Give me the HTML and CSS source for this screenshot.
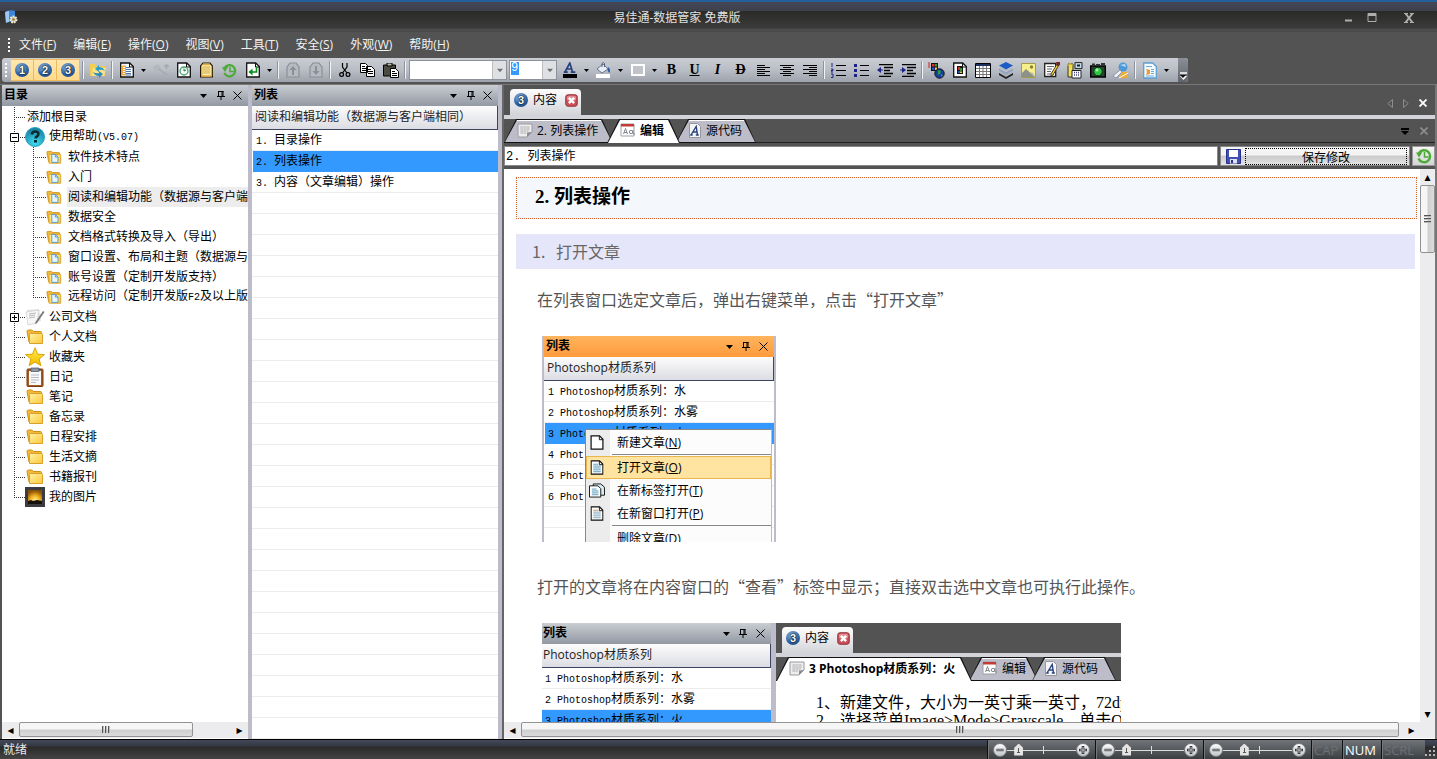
FILE: index.html
```html
<!DOCTYPE html>
<html lang="zh-CN">
<head>
<meta charset="utf-8">
<title>易佳通-数据管家 免费版</title>
<link rel="stylesheet" href="styles.css">
</head>
<body>
<svg class="defs" aria-hidden="true">
  <defs>
    <linearGradient id="gFold" x1="0" y1="0" x2="1" y2="1"><stop offset="0" stop-color="#fff3a8"/><stop offset="1" stop-color="#fbc83a"/></linearGradient>
    <radialGradient id="gTeal" cx=".5" cy=".8" r=".8"><stop offset="0" stop-color="#3fe0ef"/><stop offset="1" stop-color="#1577a0"/></radialGradient>
    <linearGradient id="gStar" x1="0" y1="0" x2="0" y2="1"><stop offset="0" stop-color="#fff04a"/><stop offset="1" stop-color="#f3b800"/></linearGradient>
    <radialGradient id="gSun" cx=".5" cy=".75" r=".7"><stop offset="0" stop-color="#fff2a0"/><stop offset=".5" stop-color="#f0b020"/><stop offset="1" stop-color="#8a5208"/></radialGradient>
    <linearGradient id="gKnob" x1="0" y1="0" x2="0" y2="1"><stop offset="0" stop-color="#fff"/><stop offset="1" stop-color="#bfc2c6"/></linearGradient>
  </defs>
  <symbol id="folder" viewBox="0 0 18 16"><path d="M1 2.500Q1 1 2.500 1H6l1.500 1.500H14.500Q15.500 2.500 15.500 3.500V13H3Z" fill="#f3b838" stroke="#d0911c"/><path d="M3.500 14.500V5.500Q3.500 4.500 4.500 4.500H15.500Q16.500 4.500 16.500 5.500V14.500Z" fill="url(#gFold)" stroke="#d9a127"/></symbol>
  <symbol id="folderdoc" viewBox="0 0 18 16"><use href="#folder" width="18" height="16"/><path d="M6.500 4.500h4l3 3v6h-7z" fill="#e8f4fd" stroke="#4a94d6"/><path d="M10.500 4.500v3h3" fill="none" stroke="#4a94d6"/></symbol>
  <symbol id="help" viewBox="0 0 20 20"><circle cx="10" cy="10" r="9.500" fill="url(#gTeal)" stroke="#2aa6c0"/><path d="M6.800 7.500q.3-3 3.400-3 3.200 0 3.200 2.600 0 1.600-1.500 2.400-1.300.7-1.300 2" fill="none" stroke="#082c30" stroke-width="2.600"/><rect x="9" y="13" width="3" height="2.600" fill="#082c30"/></symbol>
  <symbol id="papers" viewBox="0 0 20 20"><path d="M2 3l12-1 2 12-12 2z" fill="#e2e2e2"/><path d="M1 5l13-2-2 13-9 2z" fill="#f6f6f6" stroke="#ccc" stroke-width=".7"/><path d="M4 7l7-1M4 9l6-1M4 11l6-1" stroke="#bbb"/><path d="M18 4l1.500 1L12 16l-2 1 .5-2z" fill="#777"/></symbol>
  <symbol id="star" viewBox="0 0 20 20"><path d="M10 .8l2.500 6.400 6.900.4-5.300 4.400 1.800 6.700L10 15l-5.900 3.700 1.800-6.700L.6 7.600l6.900-.4z" fill="url(#gStar)" stroke="#dca300"/></symbol>
  <symbol id="clip" viewBox="0 0 20 20"><rect x="2" y="2" width="16" height="17.500" rx="1" fill="#a65b22" stroke="#7a3d12"/><path d="M4 4h12v14H4z" fill="#f7f8fa"/><path d="M6 8h8M6 10.500h8M6 13h8M6 15.500h5" stroke="#b9bcc4"/><path d="M6 1h8v3.500H6z" fill="#8b96a6" stroke="#4e5866" stroke-width=".7"/></symbol>
  <symbol id="sunset" viewBox="0 0 20 20"><path d="M0 0h20v20H0z" fill="#3b3b40"/><path d="M3 3h14v14H3z" fill="url(#gSun)"/><path d="M3 14l3-1 2 1 4-1 5 1v3H3z" fill="#16120b"/></symbol>
  <symbol id="page" viewBox="0 0 14 16"><path d="M.7 1h9l3.600 3.600V15H.7z" fill="#fff" stroke="#111" stroke-width="1.300"/><path d="M9.500 1v4h4" fill="none" stroke="#111"/></symbol>
  <symbol id="pagetext" viewBox="0 0 14 16"><use href="#page" width="14" height="16"/><path d="M3 4.500h5M3 6.500h8M3 8.500h8M3 10.500h8M3 12.500h8" stroke="#5096b8"/></symbol>
  <symbol id="pagewin" viewBox="0 0 14 16"><use href="#page" width="14" height="16"/><path d="M3 4.500h5" stroke="#e08a3c"/><path d="M3 6.500h8M3 8.500h8M3 10.500h8M3 12.500h8" stroke="#7ba3ba"/></symbol>
  <symbol id="pages" viewBox="0 0 17 16"><path d="M4.500 1h8l4 3.500V13h-12z" fill="#d8ecf6" stroke="#111"/><path d="M.5 3h9l3 3v9H.5z" fill="#fff" stroke="#111"/><path d="M3 6.500h5M3 8.500h7M3 10.500h7M3 12.500h7" stroke="#5096b8"/></symbol>
  <symbol id="history" viewBox="0 0 16 16"><path d="M3 5a6 6 0 1 1-.5 5.500" fill="none" stroke="#4cab38" stroke-width="2.400"/><path d="M0 4.500l6.500-.2L3 9.500z" fill="#4cab38"/><path d="M8.500 4v5h4" fill="none" stroke="#4cab38" stroke-width="1.600"/></symbol>
  <symbol id="down" viewBox="0 0 7 4"><path d="M0 0h7L3.500 4z" fill="#000"/></symbol>
  <symbol id="pin" viewBox="0 0 8 9"><path d="M1.500 0v5M6 0v5M1 .5h5.500M0 5.500h8M4 6v3M5 0v5" fill="none" stroke="#000"/></symbol>
  <symbol id="x" viewBox="0 0 9 9"><path d="M.5.5l8 8M8.500.5l-8 8" stroke="currentColor"/></symbol>
  <symbol id="closered" viewBox="0 0 14 14"><rect x=".8" y=".8" width="12.400" height="12.400" rx="2.500" fill="#c9515a" stroke="#8d2731"/><rect x="2" y="2" width="10" height="5" rx="2" fill="#e08c90"/><path d="M4.200 4.200l5.600 5.600M9.800 4.200L4.200 9.800" stroke="#fff" stroke-width="2.600"/></symbol>
  <symbol id="thumbpage" viewBox="0 0 16 15"><path d="M1 1h14v8l-5 5H1z" fill="#ededee" stroke="#9a9aa0"/><path d="M3 4h10M3 6h10M3 8h8M3 10h6M5 3v8M8 3v8M11 3v6" stroke="#c2c2c5"/><path d="M15 9l-5 .5V14z" fill="#8b8b92"/></symbol>
  <symbol id="aa" viewBox="0 0 16 15"><path d="M1 1h13v12H1z" fill="#fff" stroke="#9aa0aa"/><path d="M1 1h13v2.500H1z" fill="#c43a34"/><path d="M3.500 11l2-5.500L7.500 11M4 9.500h3" fill="none" stroke="#82868d"/><circle cx="11" cy="9" r="1.700" fill="none" stroke="#82868d"/><path d="M13 7v4h2" fill="none" stroke="#82868d"/></symbol>
  <symbol id="srcA" viewBox="0 0 12 15"><path d="M.5.5h8l3 3v11H.5z" fill="#f5f5f6" stroke="#96969c"/><path d="M2 12L7.200 3.500 8.500 12M3.500 9h4.500M1.200 12h2.500M6.800 12h3" fill="none" stroke="#27417c" stroke-width="1.400"/></symbol>
  <symbol id="minus" viewBox="0 0 14 14"><circle cx="7" cy="7" r="6.500" fill="url(#gKnob)" stroke="#77797c"/><path d="M3.500 7h7" stroke="#33363a" stroke-width="2.400"/><path d="M4 7h6" stroke="#ddd" stroke-width=".8"/></symbol>
  <symbol id="plus" viewBox="0 0 14 14"><circle cx="7" cy="7" r="6.500" fill="url(#gKnob)" stroke="#77797c"/><path d="M3 7h8M7 3v8" stroke="#33363a" stroke-width="2.600"/><path d="M4 7h6M7 4v6" stroke="#ddd" stroke-width=".8"/></symbol>
</svg>

<div class="window">
  <header class="titlebar">
    <svg class="logo" width="14" height="15" viewBox="0 0 14 15"><path d="M1 2q5-3 10-1v11q-5-1-9 1z" fill="#3c86d8"/><path d="M1 2q3-1 4-1v11q-2 0-3 1z" fill="#9fc8f2"/><circle cx="9.500" cy="9.500" r="3" fill="#d8c89a" stroke="#f3ead0" stroke-width="2" stroke-dasharray="1.600 1"/><circle cx="9.500" cy="9.500" r="1.200" fill="#8a7a50"/></svg>
    <h1 class="apptitle">易佳通-数据管家 免费版</h1>
    <div class="winbtns">
      <button aria-label="最小化"><svg width="9" height="9" viewBox="0 0 9 9"><path d="M1 7.500h7" stroke="#aeaeae" stroke-width="2"/></svg></button>
      <button aria-label="最大化"><svg width="10" height="9" viewBox="0 0 10 9"><path d="M1 .5h8v8H1z" fill="none" stroke="#aeaeae"/><path d="M1 1.500h8" stroke="#aeaeae" stroke-width="3"/></svg></button>
      <button aria-label="关闭" class="last"><svg width="10" height="10" viewBox="0 0 10 10"><path d="M1.500.5l7 9M8.500.5l-7 9" stroke="#aeaeae" stroke-width="2"/><path d="M0 .5h4M6 .5h4M0 9.500h4M6 9.500h4" stroke="#aeaeae"/></svg></button>
    </div>
  </header>

  <nav class="menubar">
    <span class="grip"></span>
    <button>文件(<u>F</u>)</button><button>编辑(<u>E</u>)</button><button>操作(<u>O</u>)</button><button>视图(<u>V</u>)</button><button>工具(<u>T</u>)</button><button>安全(<u>S</u>)</button><button>外观(<u>W</u>)</button><button>帮助(<u>H</u>)</button>
  </nav>

  <div class="toolrow">
  <div class="toolbar" role="toolbar" aria-label="工具栏">
    <span class="grip"></span>
    <button class="tb on" aria-label="目录窗口"><span class="num">1</span></button>
    <button class="tb on" aria-label="列表窗口"><span class="num">2</span></button>
    <button class="tb on" aria-label="内容窗口"><span class="num">3</span></button>
    <i class="sep"></i>
    <button class="tb" aria-label="刷新目录"><svg width="16" height="16" viewBox="0 0 16 16"><path d="M0 2h5l1 2h9v10H0z" fill="#f2cf52"/><path d="M3 6h13l-2 8H2z" fill="#fae28a"/><path d="M5 7l4-4v2q4 0 6 4-3-2-6-1v2z" fill="#2d9fce"/><path d="M13 12l-4 4v-2q-4 0-6-4 3 2 6 1V9z" fill="#2d8cc0"/></svg></button>
    <i class="sep"></i>
    <button class="tb" aria-label="新建文章"><svg width="14" height="16" viewBox="0 0 14 16"><use href="#page" width="14" height="16"/><path d="M2 3.500h4v10H2z" fill="#f4a83a"/><path d="M6 5.500h4M6 7.500h5M6 9.500h5M6 11.500h5M6 13h5" stroke="#4b78b0"/><path d="M3 5.500h2M3 7.500h2M3 9.500h2M3 11.500h2" stroke="#fff"/></svg></button>
    <button class="arr" aria-label="更多新建"><svg width="5" height="3"><use href="#down"/></svg></button>
    <button class="tb" aria-label="密钥" disabled><svg width="16" height="16" viewBox="0 0 16 16"><circle cx="4" cy="6" r="3.500" fill="#b3b7be"/><path d="M6 7l8 6M11 4h5M13.500 2v5" stroke="#a4a8b0" stroke-width="1.500"/></svg></button>
    <button class="tb" aria-label="定时文章"><svg width="14" height="16" viewBox="0 0 14 16"><use href="#page" width="14" height="16"/><circle cx="7" cy="9" r="4" fill="#f3fbf4" stroke="#46a071" stroke-width="1.300"/><path d="M7 9V6.500M7 9l2-1" stroke="#276b48"/></svg></button>
    <button class="tb" aria-label="便笺"><svg width="13" height="16" viewBox="0 0 13 16"><path d="M3 1h7l2.500 3v11H.6V4z" fill="#fff3b0" stroke="#1b1608" stroke-width="1.200"/><path d="M3 2.500h7M1.500 14h10M1.800 4v10M11.500 4v10" stroke="#e9a83a" stroke-width="1.400"/><path d="M3 5h7M3 7h7M3 9h7M3 11h7" stroke="#c9a24a"/></svg></button>
    <button class="tb" aria-label="历史"><svg width="15" height="15"><use href="#history"/></svg></button>
    <button class="tb" aria-label="返回"><svg width="14" height="16" viewBox="0 0 14 16"><use href="#page" width="14" height="16"/><path d="M10.500 5v5H5" fill="none" stroke="#0c8a1c" stroke-width="1.600"/><path d="M2.500 10L6.500 6.500v7z" fill="#0c8a1c"/></svg></button>
    <button class="arr" aria-label="更多返回"><svg width="5" height="3"><use href="#down"/></svg></button>
    <i class="sep"></i>
    <button class="tb" aria-label="上移" disabled><svg width="14" height="16" viewBox="0 0 14 16"><path d="M1 5l3-4h6l3 4v10H1z" fill="#b6bac1" stroke="#8a8f98" stroke-width="1.200"/><path d="M7 4l3.500 4H8v5H6V8H3.500z" fill="#8a8f98"/></svg></button>
    <button class="tb" aria-label="下移" disabled><svg width="14" height="16" viewBox="0 0 14 16"><path d="M1 5l3-4h6l3 4v10H1z" fill="#b6bac1" stroke="#8a8f98" stroke-width="1.200"/><path d="M7 13l3.500-4H8V4H6v5H3.500z" fill="#8a8f98"/></svg></button>
    <i class="sep"></i>
    <button class="tb" aria-label="剪切"><svg width="12" height="15" viewBox="0 0 12 15"><path d="M3.500 0v4l4.500 6M8 0v4l-4.500 6" fill="none" stroke="#000" stroke-width="1.200"/><circle cx="2.600" cy="11.500" r="1.900" fill="none" stroke="#000" stroke-width="1.200"/><circle cx="9" cy="11.500" r="1.900" fill="none" stroke="#000" stroke-width="1.200"/></svg></button>
    <button class="tb" aria-label="复制"><svg width="15" height="14" viewBox="0 0 15 14"><path d="M.5.5h5l2 2v7h-7zM6.500 3.500h5l3 3v7h-8z" fill="#fff" stroke="#000"/><path d="M2 3.500h3M2 5.500h4M2 7.500h4M8 6.500h3M8 8.500h5M8 10.500h5" stroke="#000"/></svg></button>
    <button class="tb" aria-label="粘贴"><svg width="16" height="15" viewBox="0 0 16 15"><path d="M.5 2h12v11H.5z" fill="#4b4b40" stroke="#000"/><path d="M4 0h5v3H4z" fill="#b9b9a6" stroke="#000"/><path d="M7.500 5.500h5l3 3v6h-8z" fill="#fff" stroke="#000"/><path d="M9 8.500h3M9 10.500h5M9 12.500h5" stroke="#000"/></svg></button>
    <i class="sep"></i>
    <label class="combo wide"><select aria-label="字体"><option></option></select><span class="drop"><svg width="6" height="5"><use href="#down"/></svg></span></label>
    <label class="combo"><select class="sel" aria-label="字号"><option>9</option></select><span class="drop"><svg width="6" height="5"><use href="#down"/></svg></span></label>
    <button class="tb" aria-label="字体颜色"><svg width="14" height="16" viewBox="0 0 14 16"><path d="M0 12h14v4H0z"/><path d="M2 10L6.800 1l2.800 9M4 7h5M.8 10.200h4M7.800 10.200h4.500" fill="none" stroke="#27427e" stroke-width="1.700"/></svg></button>
    <button class="arr" aria-label="选择字体颜色"><svg width="5" height="3"><use href="#down"/></svg></button>
    <button class="tb" aria-label="填充颜色"><svg width="15" height="16" viewBox="0 0 15 16"><path d="M0 12h14v4H0z" fill="#fff"/><path d="M1 7l6-5 5 5-6 4z" fill="#e9eef5" stroke="#62779b"/><path d="M6 5V1.500q1.500-2 2.500 0V5" fill="none" stroke="#53617c"/><path d="M12 5q3 2 1.500 6Q11 9 12 5z" fill="#2c58a0"/></svg></button>
    <button class="arr" aria-label="选择填充颜色"><svg width="5" height="3"><use href="#down"/></svg></button>
    <button class="tb" aria-label="边框"><svg width="14" height="12"><rect x="1" y="1" width="12" height="10" fill="#c0c4ca" stroke="#fff" stroke-width="2"/></svg></button>
    <button class="arr" aria-label="选择边框"><svg width="5" height="3"><use href="#down"/></svg></button>
    <button class="tb fmt" aria-label="粗体"><b>B</b></button>
    <button class="tb fmt" aria-label="下划线"><u>U</u></button>
    <button class="tb fmt" aria-label="斜体"><em>I</em></button>
    <button class="tb fmt" aria-label="删除线"><s>D</s></button>
    <button class="tb" aria-label="左对齐"><svg width="14" height="11" viewBox="0 0 14 11"><path d="M0 .5h8M0 2.500h13M0 4.500h8M0 6.500h13M0 8.500h8M0 10.500h13" stroke="#000"/></svg></button>
    <button class="tb" aria-label="居中"><svg width="14" height="11" viewBox="0 0 14 11"><path d="M0 .5h14M3 2.500h8M0 4.500h14M3 6.500h8M0 8.500h14M3 10.500h8" stroke="#000"/></svg></button>
    <button class="tb" aria-label="右对齐"><svg width="14" height="11" viewBox="0 0 14 11"><path d="M0 .5h14M6 2.500h8M0 4.500h14M6 6.500h8M0 8.500h14M6 10.500h8" stroke="#000"/></svg></button>
    <i class="sep"></i>
    <button class="tb" aria-label="编号列表"><svg width="15" height="15" viewBox="0 0 15 15"><path d="M1 0v4M0 6h2v1.500H0V9h2M0 11h2v3.500H0" fill="none" stroke="#1b2387"/><path d="M5 2.500h10M5 7.500h10M5 12.500h10" stroke="#000"/></svg></button>
    <button class="tb" aria-label="项目列表"><svg width="15" height="15" viewBox="0 0 15 15"><path d="M0 1h3v3H0zM0 6h3v3H0zM0 11h3v3H0z" fill="#1b2387"/><path d="M6 2.500h9M6 7.500h9M6 12.500h9" stroke="#000"/></svg></button>
    <button class="tb" aria-label="减少缩进"><svg width="16" height="13" viewBox="0 0 16 13"><path d="M0 6l4-3v6z" fill="#1b2387"/><path d="M3 6h3" stroke="#1b2387"/><path d="M2 .5h14M2 12.500h12M7 3.500h9M7 6.500h6M7 9.500h9" stroke="#000" stroke-width="1.400"/></svg></button>
    <button class="tb" aria-label="增加缩进"><svg width="16" height="13" viewBox="0 0 16 13"><path d="M6 6L2 3v6z" fill="#1b2387"/><path d="M0 6h3" stroke="#1b2387"/><path d="M2 .5h14M2 12.500h12M7 3.500h9M7 6.500h6M7 9.500h9" stroke="#000" stroke-width="1.400"/></svg></button>
    <i class="sep"></i>
    <button class="tb" aria-label="超链接"><svg width="17" height="17" viewBox="0 0 17 17"><path d="M3 1h7v8H3z" fill="#111"/><path d="M4 2h2.500v2.500H4z" fill="#d33"/><path d="M7 2h2v2.500H7z" fill="#2a9c2a"/><path d="M4 5.500h2.500V8H4z" fill="#25c"/><path d="M7 5.500h2V8H7z" fill="#ec3"/><path d="M0 1h2M0 3h2M0 5h2" stroke="#c22"/><circle cx="11.500" cy="11.500" r="4.700" fill="#1a3ca8" stroke="#111"/><path d="M10 8l3 1-1 3-2 1zM13 12l2 1-2 2z" fill="#27a52e"/></svg></button>
    <button class="tb" aria-label="插入文件"><svg width="14" height="16" viewBox="0 0 14 16"><use href="#page" width="14" height="16"/><path d="M4 4h6v8H4z" fill="#111"/><path d="M5 5h2v3H5z" fill="#c33"/><path d="M7 6h2v3H7z" fill="#2a9c2a"/><path d="M5 9h2v2H5z" fill="#25c"/><path d="M7 9.500h2v1.500H7z" fill="#ec3"/></svg></button>
    <button class="tb" aria-label="表格"><svg width="16" height="15" viewBox="0 0 16 15"><path d="M.5.5h15v14H.5z" fill="#fff" stroke="#000"/><path d="M1 2h14" stroke="#1d3161" stroke-width="2"/><path d="M1 5.500h14M1 8.500h14M1 11.500h14M4.500 3v11M8 3v11M11.500 3v11" stroke="#777"/></svg></button>
    <button class="tb" aria-label="图层"><svg width="14" height="17" viewBox="0 0 14 17"><path d="M7 0l7 3.500L7 7.500 0 3.500z" fill="#1c5cc6"/><path d="M0 6.500l7 4 7-4v2l-7 4-7-4z" fill="#8fa4bc"/><path d="M0 11l7 4 7-4v2l-7 4-7-4z" fill="#222"/></svg></button>
    <button class="tb" aria-label="图片"><svg width="15" height="15" viewBox="0 0 15 15"><path d="M.5.5h14v14H.5z" fill="#f7ee8c" stroke="#a69b4b"/><circle cx="10.500" cy="4" r="1.700" fill="#8b812e"/><path d="M1 14v-4l4-4 9 8z" fill="#8e9187"/><path d="M9 10l2-1 3 4v1z" fill="#b9bdb0"/></svg></button>
    <button class="tb" aria-label="编辑文本"><svg width="16" height="16" viewBox="0 0 16 16"><path d="M.7 1.500h11v13H.7z" fill="#fff" stroke="#222" stroke-width="1.300"/><path d="M3 4.500h7M3 7h5M3 9.500h4M3 12h7" stroke="#666"/><path d="M13 2l2 1-6 10-2 1V12z" fill="#f0c63a" stroke="#222" stroke-width=".8"/><path d="M12 0h4v3l-3 1z" fill="#7d2222"/></svg></button>
    <button class="tb" aria-label="模板"><svg width="16" height="17" viewBox="0 0 16 17"><path d="M1 2h5v13H1z" fill="#f2df5a" stroke="#333"/><path d="M3 0v6M0 3h6" stroke="#e9d23a"/><path d="M8 .6h7v6H8z" fill="#c8dbe8" stroke="#222"/><path d="M10 2.500h3v2h-3z" fill="#123"/><path d="M5 8.500h9V16H5z" fill="#fff" stroke="#222"/><path d="M7 10.500h5M7 13h5" stroke="#448" stroke-dasharray="1 1" stroke-width="1.500"/></svg></button>
    <button class="tb" aria-label="截图"><svg width="16" height="17" viewBox="0 0 16 17"><path d="M.7 4h14.600v11H.7z" fill="#2c4236" stroke="#000" stroke-width="1.400"/><path d="M2 1.500h3V4H2zM11 1h4v3h-4zM6 2h4v2H6z" fill="#333"/><circle cx="8" cy="9.500" r="4.300" fill="#30c644" stroke="#06310d"/><circle cx="7" cy="8" r="1.500" fill="#a6f4ac"/></svg></button>
    <button class="tb" aria-label="格式刷"><svg width="16" height="17" viewBox="0 0 16 17"><circle cx="10" cy="5" r="4.500" fill="#4d9ad6"/><path d="M7 3l5-1 1 3z" fill="#b9dcf4"/><path d="M0 14l7-6 2 2-6 6z" fill="#eef3f7" stroke="#8698a8"/><path d="M9 10h6v6H6z" fill="#f0ad35"/><path d="M6 16l9-5" stroke="#fff"/></svg></button>
    <i class="sep"></i>
    <button class="tb" aria-label="收藏文档"><svg width="14" height="17" viewBox="0 0 14 17"><path d="M.7 1h9l3.600 3.500V16H.7z" fill="#f4fafe" stroke="#5b9fd6" stroke-width="1.300"/><path d="M3 4.500h6M3 14h8M8 7.500h3M8 9.500h3M8 11.500h3" stroke="#6da9d8"/><path d="M3 7l4 1v4l-4 1 1-3z" fill="#ee9a2c"/></svg></button>
    <button class="arr" aria-label="更多收藏"><svg width="5" height="3"><use href="#down"/></svg></button>
    <button class="over" aria-label="工具栏选项"><svg width="7" height="8" viewBox="0 0 7 8"><path d="M0 1h7" stroke="#fff" stroke-width="1.500"/><path d="M0 4h7L3.500 8z" fill="#fff"/><path d="M0 3h6L3 6z" fill="#111"/></svg></button>
  </div>
  </div>

  <main class="main">
    <section class="pane catalog" aria-label="目录">
      <div class="phead"><h2>目录</h2><button aria-label="菜单"><svg width="7" height="4"><use href="#down"/></svg></button><button aria-label="固定"><svg width="8" height="9"><use href="#pin"/></svg></button><button aria-label="关闭"><svg width="9" height="9"><use href="#x"/></svg></button></div>
      <ul class="tree">
        <li class="row add"><i class="h"></i><a href="#add">添加根目录</a></li>
        <li class="row"><i class="h box"><svg width="9" height="9" viewBox="0 0 9 9"><path d="M.5.5h8v8h-8z" fill="#fff" stroke="#000"/><path d="M2 4.500h5" stroke="#000"/></svg></i><svg width="20" height="20"><use href="#help"/></svg><a href="#help-doc">使用帮助<span class="m">(V5.07)</span></a></li>
        <li>
          <ul class="sub">
            <li class="row"><i class="h"></i><svg width="16" height="15"><use href="#folderdoc"/></svg><a href="#c1">软件技术特点</a></li>
            <li class="row"><i class="h"></i><svg width="16" height="15"><use href="#folderdoc"/></svg><a href="#c2">入门</a></li>
            <li class="row cur"><i class="h"></i><svg width="16" height="15"><use href="#folderdoc"/></svg><a href="#c3">阅读和编辑功能（数据源与客户端相同）</a></li>
            <li class="row"><i class="h"></i><svg width="16" height="15"><use href="#folderdoc"/></svg><a href="#c4">数据安全</a></li>
            <li class="row"><i class="h"></i><svg width="16" height="15"><use href="#folderdoc"/></svg><a href="#c5">文档格式转换及导入（导出）</a></li>
            <li class="row"><i class="h"></i><svg width="16" height="15"><use href="#folderdoc"/></svg><a href="#c6">窗口设置、布局和主题（数据源与客户端）</a></li>
            <li class="row"><i class="h"></i><svg width="16" height="15"><use href="#folderdoc"/></svg><a href="#c7">账号设置（定制开发版支持）</a></li>
            <li class="row"><i class="h"></i><svg width="16" height="15"><use href="#folderdoc"/></svg><a href="#c8">远程访问（定制开发版<span class="m">F2</span>及以上版本）</a></li>
          </ul>
        </li>
        <li class="row"><i class="h box"><svg width="9" height="9" viewBox="0 0 9 9"><path d="M.5.5h8v8h-8z" fill="#fff" stroke="#000"/><path d="M2 4.500h5M4.500 2v5" stroke="#000"/></svg></i><svg width="20" height="20"><use href="#papers"/></svg><a href="#r1">公司文档</a></li>
        <li class="row"><i class="h"></i><svg width="20" height="16"><use href="#folder"/></svg><a href="#r2">个人文档</a></li>
        <li class="row"><i class="h"></i><svg width="20" height="20"><use href="#star"/></svg><a href="#r3">收藏夹</a></li>
        <li class="row"><i class="h"></i><svg width="20" height="20"><use href="#clip"/></svg><a href="#r4">日记</a></li>
        <li class="row"><i class="h"></i><svg width="20" height="16"><use href="#folder"/></svg><a href="#r5">笔记</a></li>
        <li class="row"><i class="h"></i><svg width="20" height="16"><use href="#folder"/></svg><a href="#r6">备忘录</a></li>
        <li class="row"><i class="h"></i><svg width="20" height="16"><use href="#folder"/></svg><a href="#r7">日程安排</a></li>
        <li class="row"><i class="h"></i><svg width="20" height="16"><use href="#folder"/></svg><a href="#r8">生活文摘</a></li>
        <li class="row"><i class="h"></i><svg width="20" height="16"><use href="#folder"/></svg><a href="#r9">书籍报刊</a></li>
        <li class="row end"><i class="h"></i><svg width="20" height="20"><use href="#sunset"/></svg><a href="#r10">我的图片</a></li>
      </ul>
      <div class="hscroll"><button aria-label="向左">◂</button><div class="track"><div class="thumb part"><i></i></div></div><button aria-label="向右">▸</button></div>
    </section>

    <section class="pane list" aria-label="列表">
      <div class="phead"><h2>列表</h2><button aria-label="菜单"><svg width="7" height="4"><use href="#down"/></svg></button><button aria-label="固定"><svg width="8" height="9"><use href="#pin"/></svg></button><button aria-label="关闭"><svg width="9" height="9"><use href="#x"/></svg></button></div>
      <div class="colhead">阅读和编辑功能（数据源与客户端相同）</div>
      <ul class="lines">
        <li><span class="m">1. </span>目录操作</li>
        <li class="sel"><span class="m">2. </span>列表操作</li>
        <li><span class="m">3. </span>内容（文章编辑）操作</li>
      </ul>
    </section>

    <section class="content" aria-label="内容">
      <div class="toptabs">
        <div class="ctab"><span class="num">3</span><span>内容</span><button aria-label="关闭内容"><svg width="13" height="13"><use href="#closered"/></svg></button></div>
        <div class="tabnav">
          <button aria-label="上一个"><svg width="6" height="9" viewBox="0 0 6 9"><path d="M5.500.5v8L.8 4.500z" fill="none" stroke="#8c8c8c"/></svg></button>
          <button aria-label="下一个"><svg width="6" height="9" viewBox="0 0 6 9"><path d="M.5.5v8l4.700-4z" fill="none" stroke="#8c8c8c"/></svg></button>
          <button aria-label="关闭"><svg width="8" height="8" viewBox="0 0 8 8"><path d="M.5.5l7 7M7.500.5l-7 7" stroke="#fff" stroke-width="1.800"/></svg></button>
        </div>
      </div>
      <div class="subtabs">
        <button class="st w1"><svg width="16" height="15"><use href="#thumbpage"/></svg>2. 列表操作</button>
        <button class="st act w2"><svg width="16" height="15"><use href="#aa"/></svg>编辑</button>
        <button class="st w3"><svg width="12" height="15"><use href="#srcA"/></svg>源代码</button>
        <div class="tabnav">
          <button aria-label="标签列表"><svg width="8" height="7" viewBox="0 0 8 7"><path d="M0 0h8v2H0zM0 3h8L4 7z"/></svg></button>
          <button aria-label="关闭标签"><svg width="8" height="8" viewBox="0 0 8 8"><path d="M.5.5l7 7M7.500.5l-7 7" stroke="#8f8f8f" stroke-width="1.600"/></svg></button>
        </div>
      </div>
      <div class="titlerow">
        <input type="text" aria-label="标题" value="2. 列表操作">
        <button class="save"><svg width="15" height="15" viewBox="0 0 15 15"><path d="M.5.5h14v14H.5z" fill="#3f50b8" stroke="#27308a"/><path d="M3 1h9v7H3z" fill="#fff"/><path d="M4 10h7v4.500H4z" fill="#dfe3f4"/><path d="M5 11h2v3H5z" fill="#27308a"/></svg><span>保存修改</span></button>
        <button class="hist" aria-label="历史版本"><svg width="16" height="16"><use href="#history"/></svg></button>
      </div>
      <div class="docwrap">
        <article class="doc">
          <h2 class="dt">2. 列表操作</h2>
          <h3 class="ds"><span>1.</span>打开文章</h3>
          <p>在列表窗口选定文章后，弹出右键菜单，点击“打开文章”</p>
          <figure class="shot one">
            <div class="phead orange"><h4>列表</h4><svg width="7" height="4"><use href="#down"/></svg><svg width="8" height="9"><use href="#pin"/></svg><svg width="9" height="9"><use href="#x"/></svg></div>
            <div class="colhead">Photoshop材质系列</div>
            <ul class="lines">
              <li><span class="m">1 Photoshop</span>材质系列：水</li>
              <li><span class="m">2 Photoshop</span>材质系列：水雾</li>
              <li class="sel"><span class="m">3 Photoshop</span>材质系列：火</li>
              <li><span class="m">4 Phot</span></li>
              <li><span class="m">5 Phot</span></li>
              <li><span class="m">6 Phot</span></li>
            </ul>
            <div class="ctx">
              <div class="it"><svg width="13" height="15"><use href="#page"/></svg><span>新建文章(<u>N</u>)</span></div>
              <hr>
              <div class="it hot"><svg width="13" height="15"><use href="#pagetext"/></svg><span>打开文章(<u>O</u>)</span></div>
              <div class="it"><svg width="16" height="15"><use href="#pages"/></svg><span>在新标签打开(<u>T</u>)</span></div>
              <div class="it"><svg width="13" height="15"><use href="#pagewin"/></svg><span>在新窗口打开(<u>P</u>)</span></div>
              <hr>
              <div class="it"><i></i><span>删除文章(<u>D</u>)</span></div>
            </div>
          </figure>
          <p class="p2">打开的文章将在内容窗口的“查看”标签中显示；直接双击选中文章也可执行此操作。</p>
          <figure class="shot two">
            <div class="left">
              <div class="phead"><h4>列表</h4><svg width="7" height="4"><use href="#down"/></svg><svg width="8" height="9"><use href="#pin"/></svg><svg width="9" height="9"><use href="#x"/></svg></div>
              <div class="colhead">Photoshop材质系列</div>
              <ul class="lines">
                <li><span class="m">1 Photoshop</span>材质系列：水</li>
                <li><span class="m">2 Photoshop</span>材质系列：水雾</li>
                <li class="sel"><span class="m">3 Photoshop</span>材质系列：火</li>
              </ul>
            </div>
            <div class="right">
              <div class="toptabs"><div class="ctab"><span class="num">3</span><span>内容</span><svg width="13" height="13"><use href="#closered"/></svg></div></div>
              <div class="subtabs">
                <div class="st act v1"><svg width="16" height="15"><use href="#thumbpage"/></svg>3 Photoshop材质系列：火</div>
                <div class="st v2"><svg width="16" height="15"><use href="#aa"/></svg>编辑</div>
                <div class="st v3"><svg width="12" height="15"><use href="#srcA"/></svg>源代码</div>
              </div>
              <div class="mini">1、新建文件，大小为一英寸乘一英寸，72dpi<br>2、选择菜单Image&gt;Mode&gt;Grayscale，单击OK</div>
            </div>
          </figure>
        </article>
        <div class="vscroll"><button aria-label="向上">▴</button><div class="track"><div class="thumb"><i></i></div></div><button aria-label="向下">▾</button></div>
      </div>
      <div class="hscroll"><button aria-label="向左">◂</button><div class="track"><div class="thumb"><i></i></div></div><button aria-label="向右">▸</button><span class="corner"></span></div>
    </section>
  </main>

  <footer class="status">
    <span class="ready">就绪</span>
    <div class="zoom"><button aria-label="缩小目录"><svg width="14" height="14"><use href="#minus"/></svg></button><input type="range" aria-label="目录字号" value="12"><button aria-label="放大目录"><svg width="14" height="14"><use href="#plus"/></svg></button></div>
    <div class="zoom"><button aria-label="缩小列表"><svg width="14" height="14"><use href="#minus"/></svg></button><input type="range" aria-label="列表字号" value="12"><button aria-label="放大列表"><svg width="14" height="14"><use href="#plus"/></svg></button></div>
    <div class="zoom"><button aria-label="缩小内容"><svg width="14" height="14"><use href="#minus"/></svg></button><input type="range" aria-label="内容字号" value="28"><button aria-label="放大内容"><svg width="14" height="14"><use href="#plus"/></svg></button></div>
    <span class="key">CAP</span><span class="key lit">NUM</span><span class="key">SCRL</span>
    <svg class="size" width="11" height="11" viewBox="0 0 11 11"><path d="M8 0h2v2H8zM4 4h2v2H4zM8 4h2v2H8zM0 8h2v2H0zM4 8h2v2H4zM8 8h2v2H8z" fill="#b5b7ba"/></svg>
  </footer>
</div>
</body>
</html>
```
FILE: styles.css
```css
* { box-sizing: border-box; }
body, h1, h2, h3, h4, p, ul, figure { margin: 0; padding: 0; }
ul { list-style: none; }
body {
  font: 12px/20px "Open Sans", "Noto Sans CJK SC", sans-serif;
  color: #000;
  background: #535353;
  overflow: hidden;
}
button { font: inherit; color: inherit; background: none; border: 0; padding: 0; margin: 0; }
a { color: inherit; text-decoration: none; }
svg { display: block; flex: none; }
.defs { position: absolute; width: 0; height: 0; }
.m { font-family: "Liberation Mono", monospace; font-size: 10px; white-space: pre; }

.window { height: 100vh; display: flex; flex-direction: column; }

/* title bar */
.titlebar {
  display: flex; align-items: center; height: 32px; flex: none;
  padding: 2px 0 0 4px; border-top: 2px solid #23609c;
  background: linear-gradient(#454756 0, #3c404c 9px, #2a2a28 9px, #3b3b3b 26px, #4a4a4a 27px, #535353 30px);
  border-bottom: 1px solid #474747;
}
.apptitle { flex: 1; text-align: center; font-size: 12px; font-weight: 400; color: #e2e2e2; }
.winbtns { display: flex; width: 101px; }
.winbtns button { width: 24px; height: 16px; display: grid; place-items: center; }
.winbtns .last { margin-left: 13px; }

/* menu */
.menubar { display: flex; align-items: center; height: 26px; flex: none; padding-left: 5px; color: #f2f2f2; }
.menubar button { margin-right: 17px; white-space: nowrap; }
.grip { width: 9px; height: 14px; flex: none; background: repeating-linear-gradient(#fff 0 2px, transparent 2px 4px) 3px 0 / 2px 14px no-repeat; }
.menubar .grip { width: 14px; }

/* toolbar */
.toolrow { height: 26px; flex: none; padding-left: 2px; display: flex; }
.toolbar {
  display: flex; align-items: center; height: 24px; border-radius: 3px;
  background: linear-gradient(#cacdd3, #b9bdc5 50%, #9da2ac);
}
.tb { width: 23px; height: 22px; flex: none; display: grid; place-items: center; }
.tb.on { background: linear-gradient(#ffe7b0, #ffd98c); border: 1px solid #f0b95c; border-width: 1px 1px 1px 0; }
.num {
  display: block; width: 14px; height: 14px; border-radius: 50%; flex: none;
  background: radial-gradient(circle at 40% 30%, #8fb6dc, #2f66a8 55%, #123a70);
  color: #fff; font: bold 11px/14px "Liberation Sans", sans-serif; text-align: center;
  text-shadow: 0 0 1px #000, 0 0 1px #000, 0 0 2px #000;
}
.arr { width: 11px; height: 22px; flex: none; display: grid; place-items: center; }
.sep { width: 6px; height: 18px; flex: none; background: linear-gradient(#8e939d, #8e939d) 2px 0 / 1px 100% no-repeat, linear-gradient(#f1f2f4, #f1f2f4) 3px 0 / 1px 100% no-repeat; }
.combo { display: flex; width: 48px; height: 20px; flex: none; margin-right: 1px; background: #fff; border: 1px solid #8d9199; }
.combo.wide { width: 98px; margin: 0 2px 0 1px; }
.combo select { appearance: none; flex: 1; min-width: 0; border: 0; background: none; padding: 0; font: 12px "Liberation Sans", sans-serif; }
.combo .sel { flex: none; width: 8px; height: 13px; margin: 1px auto 0 1px; background: #3399ff; color: #fff; font: 12px/13px "Liberation Mono", monospace; }
.drop { width: 14px; display: grid; place-items: center; opacity: .55; background: #c5c8cd; border-left: 1px solid #888; }
.fmt { font: bold 14px/20px "Liberation Serif", serif; }
.over { width: 10px; height: 24px; margin-left: 6px; display: grid; place-items: end center; padding-bottom: 2px; background: linear-gradient(#8a8e96, #60646c); border-radius: 0 4px 4px 0; }

/* panes */
.main { flex: 1; min-height: 0; display: flex; padding-left: 2px; border-top: 1px solid #777; }
.pane { display: flex; flex-direction: column; background: #fff; flex: none; border-right: 4px solid #bcbcca; min-width: 0; }
.catalog { width: 250px; }
.list { width: 250px; }
.phead { display: flex; align-items: center; gap: 2px; height: 21px; flex: none; padding: 0 3px 0 2px; background: linear-gradient(#c9cdd2, #9299a3); }
.phead h2, .phead h4 { flex: 1; font-size: 12px; font-weight: 700; line-height: 18px; padding-bottom: 2px; }
.phead button { width: 15px; height: 18px; display: grid; place-items: center; }
.colhead {
  height: 24px; flex: none; padding-left: 3px; line-height: 22px; white-space: nowrap; overflow: hidden; color: #222;
  background: linear-gradient(#fcfcfc, #dcdde3); border-right: 1px solid #3c4462; border-bottom: 1px solid #3c4462;
}
.lines { flex: 1; line-height: 20px; background: repeating-linear-gradient(#fff 0 20px, #ececec 20px 21px); padding-left: 1px; }
.lines li { height: 21px; padding-left: 3px; white-space: nowrap; overflow: hidden; }
.lines .sel { background: #3399ff; }

/* tree */
.tree { flex: 1; padding: 1px 0 0 12px; overflow: hidden; }
.row { display: flex; align-items: center; height: 20px; white-space: nowrap; }
.row a { padding: 0 1px; margin-left: 3px; }
.add a { margin-left: 1px; }
.tree, .sub { --dots: repeating-linear-gradient(#333 0 1px, transparent 1px 2px); }
.tree > li { background: var(--dots) 0 0 / 1px 100% no-repeat; }
.tree > .end { background-size: 1px 10px; }
.h { width: 11px; height: 20px; flex: none; background: repeating-linear-gradient(90deg, #333 0 1px, transparent 1px 2px) 0 10px / 100% 1px no-repeat; }
.box { display: flex; align-items: center; }
.box svg { margin-left: -4px; }
.sub { padding-left: 19px; }
.sub .row { background: var(--dots) 0 0 / 1px 100% no-repeat; }
.sub .row:last-child { background-size: 1px 10px; }
.sub .h { width: 13px; }
.sub a { margin-left: 5px; }
.sub .cur a { background: #ededed; }

/* scroll bars */
.hscroll { height: 17px; flex: none; display: flex; background: #ececee; border-bottom: 1px solid #fff; }
.hscroll button { width: 17px; flex: none; font: 12px/15px "DejaVu Sans", sans-serif; }
.hscroll .track { flex: 1; display: flex; }
.hscroll .thumb { flex: 1; height: 15px; border: 1px solid #929292; border-radius: 2px; background: linear-gradient(#f6f6f6 45%, #cfcfcf 55%, #dcdcdc); display: grid; place-items: center; }
.hscroll .part { flex: 0 0 82%; }
.hscroll .thumb i { width: 8px; height: 7px; background: repeating-linear-gradient(90deg, #555 0 1px, #bbb 1px 2px, transparent 2px 3px); }
.content .hscroll .thumb { margin-right: 4px; }
.corner { width: 15px; }
.vscroll { width: 15px; flex: none; display: flex; flex-direction: column; background: #ececee; }
.vscroll button { height: 16px; flex: none; font: 12px/15px "DejaVu Sans", sans-serif; }
.vscroll .track { flex: 1; }
.vscroll .thumb { height: 13%; border: 1px solid #929292; border-radius: 2px; background: linear-gradient(90deg, #f6f6f6 45%, #cfcfcf 55%, #dcdcdc); display: grid; place-items: center; }
.vscroll .thumb i { width: 7px; height: 8px; background: repeating-linear-gradient(#555 0 1px, #bbb 1px 2px, transparent 2px 3px); }

/* content */
.content { flex: 1; min-width: 0; display: flex; flex-direction: column; background: #535353; border-left: 2px solid #666; border-right: 2px solid #777; }
.toptabs { height: 34px; flex: none; display: flex; align-items: flex-end; justify-content: space-between; border-bottom: 4px solid #d3d4d9; padding-left: 6px; }
.ctab { display: flex; align-items: center; height: 26px; width: 71px; padding: 0 3px 4px 4px; gap: 5px; border-radius: 4px 4px 0 0; background: linear-gradient(#fdfdfd, #d3d4d9); }
.ctab > :last-child { margin-left: auto; }
.tabnav { display: flex; align-items: center; height: 24px; gap: 10px; margin-left: auto; padding-right: 8px; }
.subtabs { height: 24px; flex: none; display: flex; border-bottom: 1px solid #222; }
.subtabs .tabnav { gap: 11px; padding-right: 7px; }
.st { position: relative; display: flex; align-items: center; gap: 4px; height: 24px; flex: none; padding: 0 0 1px 13px; isolation: isolate; white-space: nowrap; --c: #bdbdc9; }
.st::before, .st::after { content: ""; position: absolute; z-index: -1; inset: 0; background: #111; clip-path: polygon(12px 0, calc(100% - 11px) 0, 100% 100%, 0 100%); }
.st::after { inset: 1px; background: linear-gradient(#fff 1px, var(--c) 1px); }
.st.act { --c: #fff; z-index: 1; font-weight: 700; }
.st.act::after { bottom: 0; }
.w1 { width: 109px; }
.w2 { width: 73px; margin-left: -6px; }
.w3 { width: 80px; margin-left: -4px; }
.w3, .v3 { gap: 5px; }
.titlerow { display: flex; height: 26px; flex: none; padding: 3px 0; gap: 2px; }
.titlerow input { flex: 1; min-width: 0; border: 1px solid #888; padding: 0 1px 2px; font: 12px "Liberation Mono", "Noto Sans CJK SC", monospace; background: #fff; }
.save { width: 190px; display: flex; align-items: center; gap: 4px; padding: 1px 2px 1px 5px; background: linear-gradient(#f4f4f4 45%, #c9c9c9 50%, #e6e6e6); border: 1px solid #888; }
.save span { flex: 1; height: 17px; line-height: 18px; border: 1px dotted #000; }
.hist { width: 23px; display: grid; place-items: center; background: linear-gradient(#f4f4f4, #d4d4d4); border: 1px solid #999; }
.docwrap { flex: 1; min-height: 0; display: flex; background: #fff; }
.doc { flex: 1; min-width: 0; overflow: hidden; padding: 8px 3px 0 12px; font: 16px/24px "Noto Sans CJK SC", sans-serif; color: #555; }
.dt { height: 42px; padding-left: 18px; border: 1px dotted #d8612c; background: #f4f8fc; color: #000; font: bold 19px/38px "Liberation Serif", "Noto Sans CJK SC", serif; }
.ds { margin: 15px 2px 0 0; height: 35px; padding-left: 16px; background: #e6e6fa; font-size: 16px; font-weight: 400; line-height: 34px; color: #666; }
.ds span { display: inline-block; width: 24px; }
.doc p { margin-top: 18px; padding-left: 21px; white-space: nowrap; }
.doc .p2 { margin-top: 32px; }
.shot { margin: 25px 0 0 26px; overflow: hidden; font: 12px/20px "Open Sans", "Noto Sans CJK SC", sans-serif; color: #000; }
.shot .phead { gap: 9px; padding-right: 6px; }
.one { position: relative; width: 234px; height: 206px; display: flex; flex-direction: column; border: solid #bcbcca; border-width: 0 2px; }
.phead.orange { background: linear-gradient(#ffb45e, #ff9a3c); }
.ctx { position: absolute; left: 41px; top: 93px; width: 187px; padding-top: 1px; background: linear-gradient(90deg, #ececec 24px, #fcfcfc 24px); border: 1px solid #888; border-right-color: #bbb; }
.ctx .it { display: flex; align-items: center; height: 23px; }
.ctx .it > :first-child { width: 22px; flex: none; }
.ctx .it span { margin-left: 9px; }
.ctx .hot { background: #ffe3a0; border: 1px solid #e8b54e; }
.ctx .hot > :first-child { margin-left: -1px; }
.ctx hr { margin: 0 0 1px 26px; border: 0; border-top: 1px solid #888; }
.two { display: flex; width: 579px; height: 120px; }
.left { width: 234px; flex: none; border-right: 5px solid #bcbcca; }
.right { flex: 1; min-width: 0; overflow: hidden; background: #535353; }
.two .phead, .two .colhead { padding-left: 1px; }
.two .lines { padding-left: 0; }
.v1 { width: 196px; }
.v2 { width: 69px; margin-left: -3px; }
.v3 { width: 84px; margin-left: -6px; }
.mini { height: 60px; padding: 13px 0 0 40px; background: #fff; white-space: nowrap; font: 16px/18px "Liberation Serif", "Noto Sans CJK SC", serif; }

/* status bar */
.status { height: 20px; flex: none; display: flex; align-items: center; border-top: 1px solid #000; background: linear-gradient(#43495a 0, #343842 6px, #2a2a2a 7px, #444 19px); color: #e8e8e8; }
.ready { flex: 1; padding-left: 3px; }
.zoom, .key { height: 19px; flex: none; border-left: 1px solid #111; background: linear-gradient(#717478, #3c3f42); box-shadow: inset 1px 0 #777; }
.zoom { width: 108px; display: flex; align-items: center; padding: 0 5px; }
.zoom input { appearance: none; flex: 1; min-width: 0; height: 14px; margin: 0; background: linear-gradient(#ddd, #ddd) 0 7px / 100% 1px no-repeat, linear-gradient(#ddd, #ddd) 36px 3px / 1px 8px no-repeat; }
.zoom input::-webkit-slider-thumb { appearance: none; width: 9px; height: 12px; background: linear-gradient(#555, #555) 4px 4px / 1px 4px no-repeat, linear-gradient(#555, #555) 3px 8px / 3px 1px no-repeat, #e4e4e4; clip-path: polygon(50% 0, 100% 35%, 100% 100%, 0 100%, 0 35%); }
.key { padding-left: 2px; width: 31px; font-size: 13px; line-height: 20px; color: #6d7073; }
.key.lit { width: 39px; color: #fff; }
.key:last-of-type { width: 44px; }
.size { margin: 4px 1px 0 0; }
```
